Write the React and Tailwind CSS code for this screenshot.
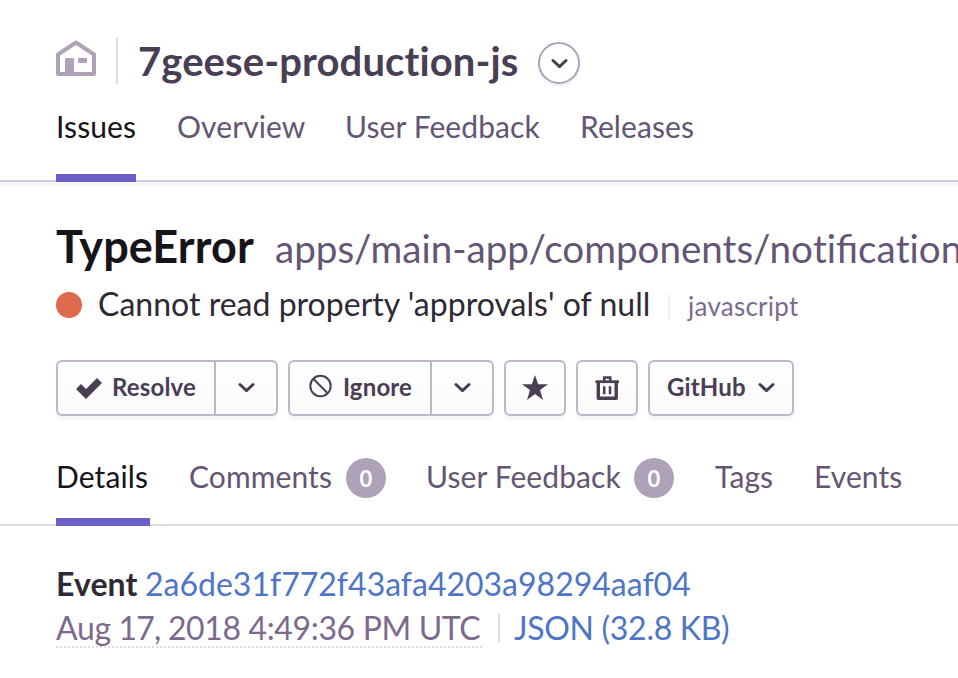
import React from "react";

function Chevron({ className = "" }) {
  return (
    <svg viewBox="0 0 18 12" className={"h-3 w-[18px] shrink-0 " + className} fill="none" stroke="currentColor" strokeWidth="3" strokeLinecap="round" strokeLinejoin="round">
      <path d="M3 2.500 9.500 8.700 16 2.500" />
    </svg>
  );
}

function Tab({ label, width, count, active }) {
  return (
    <div className={"flex shrink-0 items-start border-b-8 whitespace-nowrap " + width + (active ? " border-[#6c5fc7] text-[#161319]" : " border-transparent text-[#645574]")}>
      <span className="leading-9 tracking-[0.1px]">{label}</span>
      {count !== undefined && (
        <span className="ml-auto flex size-10 items-center justify-center rounded-full bg-[#aea2b9] text-[22px] font-bold text-white">{count}</span>
      )}
    </div>
  );
}

function Button({ children, className = "" }) {
  return (
    <button className={"flex h-14 items-center border-2 border-[#c0b5cb] bg-linear-to-b from-white to-[#fafafa] text-2xl font-bold text-[#493e54] shadow-[0_4px_0_#f6f5f7] " + className}>
      {children}
    </button>
  );
}

export default function App() {
  return (
    <div className="h-[678px] w-[958px] overflow-hidden bg-white font-['Lato',sans-serif] text-[#2f2936]">
      <header className="flex h-[182px] flex-col border-b-2 border-[#d1cadb] px-14 pt-[38px] shadow-[0_4px_0_#f6f6f8]">
        <div className="flex h-[46px]">
          <svg viewBox="0 0 40 36" className="mt-0.5 h-9 w-10 shrink-0 text-[#aea2b9]" fill="none">
            <path d="M2 14.500 20 2.500 38 14.500V34H2Z" stroke="currentColor" strokeWidth="4" strokeLinejoin="round" />
            <path d="M9 19.500q0-1.500 1.500-1.500h6.500q1 0 1 1V34H9Z" fill="currentColor" />
            <rect x="22" y="18" width="9" height="5" rx="1" fill="currentColor" />
          </svg>
          <span className="ml-5 w-0.5 bg-[#dedbe4]" />
          <h1 className="ml-5 w-[400px] text-[40px] leading-[46px] font-bold tracking-[0.1px] whitespace-nowrap text-[#493e54]">7geese-production-js</h1>
          <span className="mt-1 flex size-[42px] items-center justify-center rounded-full border-2 border-[#aea2b9] text-[#493e54] shadow-[0_2px_2px_#eeebf1]">
            <Chevron className="mt-0.5" />
          </span>
        </div>
        <nav className="-mb-0.5 mt-6 flex h-[74px] shrink-0 gap-[41px] text-[30px]">
          <Tab label="Issues" width="w-20" active />
          <Tab label="Overview" width="w-[127px]" />
          <Tab label="User Feedback" width="w-[194px]" />
          <Tab label="Releases" width="w-[114px]" />
        </nav>
      </header>

      <section className="pt-[37px] pl-14">
        <div className="flex h-[54px] items-baseline whitespace-nowrap">
          <h2 className="w-[219px] shrink-0 text-[45px] leading-[54px] font-bold tracking-[0.1px] text-[#161319]">TypeError</h2>
          <span className="text-[38.6px] leading-[50px] text-[#645574]">
            apps/main-app/components/no<span className="[font-variant-ligatures:none]">t</span>ifica<span className="[font-variant-ligatures:none]">t</span>ions
          </span>
        </div>
        <div className="mt-[11px] flex h-10 items-center whitespace-nowrap">
          <span className="mt-0.5 size-[26px] shrink-0 rounded-full bg-[#dd6a4d]" />
          <span className="ml-4 w-[570px] text-[32px] leading-10 tracking-[0.02px]">Cannot read property 'approvals' of null</span>
          <span className="mt-1.5 h-[26px] w-0.5 bg-[#f0eef5]" />
          <span className="mt-1 ml-[18px] text-[26px] leading-9 tracking-[0.25px] text-[#7c6a8e]">javascript</span>
        </div>
        <div className="mt-9 flex gap-2.5">
          <div className="flex">
            <Button className="w-40 rounded-l-md pl-[18px]">
              <svg viewBox="0 0 26 21" className="mr-2.5 h-[21px] w-[26px]" fill="currentColor">
                <path d="M0 11 5 6l5 5L21 0l5 5L10 21Z" />
              </svg>
              <span className="-mt-0.5 tracking-[0.15px]">Resolve</span>
            </Button>
            <Button className="-ml-0.5 w-16 justify-center rounded-r-md"><Chevron /></Button>
          </div>
          <div className="flex">
            <Button className="w-36 rounded-l-md pl-[19px]">
              <svg viewBox="0 0 24 24" className="mr-2.5 -mt-1 size-6" fill="none" stroke="currentColor" strokeWidth="2">
                <circle cx="11.500" cy="12" r="10.200" />
                <path d="m4.300 4.800 14.400 14.400" />
              </svg>
              <span className="-mt-0.5 tracking-[0.15px]">Ignore</span>
            </Button>
            <Button className="-ml-0.5 w-16 justify-center rounded-r-md"><Chevron /></Button>
          </div>
          <Button className="w-[62px] justify-center rounded-md">
            <svg viewBox="0 0 26 25" className="-mt-px h-[25px] w-[26px]" fill="currentColor">
              <path d="m13 0 3.100 9.300H26l-8 5.800L21 25l-8-6-8 6 3-9.900-8-5.800h9.900Z" />
            </svg>
          </Button>
          <Button className="w-[62px] justify-center rounded-md">
            <svg viewBox="0 0 24 24" className="-mt-px size-6" fill="none" stroke="currentColor">
              <path d="M.5 5.700h23.500" strokeWidth="2.800" />
              <path d="M9.200 5V1.500h6V5" strokeWidth="2.600" />
              <path d="M3.300 6v16.300h17.900V6" strokeWidth="3.400" strokeLinejoin="round" />
              <path d="M9.200 10.300V18.300M15 10.300V18.300" strokeWidth="2.500" />
            </svg>
          </Button>
          <Button className="w-[146px] rounded-md pl-[17px]">
            <span className="-mt-0.5 tracking-[0.15px]">GitHub</span>
            <Chevron className="ml-[11px]" />
          </Button>
        </div>
      </section>

      <nav className="mt-[42px] flex h-[68px] border-b-2 border-[#dedbe4] pl-14 text-[30px] whitespace-nowrap">
        <div className="-mb-0.5 flex h-[68px]">
          <Tab label="Details" width="w-[94px]" active />
          <Tab label="Comments" width="ml-[39px] w-[197px]" count={0} />
          <Tab label="User Feedback" width="ml-10 w-[248px]" count={0} />
          <Tab label="Tags" width="ml-[41px] w-[59px]" />
          <Tab label="Events" width="ml-10 w-[90px]" />
        </div>
      </nav>

      <section className="pt-9 pl-14 text-[32px] leading-[44px] whitespace-nowrap">
        <div className="flex">
          <strong className="w-[89px] tracking-[0.1px]">Event</strong>
          <a className="text-[#4e75c8]">2a6de31f772f43afa4203a98294aaf04</a>
        </div>
        <div className="flex">
          <span className="h-[42px] w-[426px] border-b-2 border-dotted border-[#dedbe4] tracking-[-0.36px] text-[#7c6a8e]">
            Aug <span className="tracking-[-0.8px]">17, </span>2018 4:49:36 PM UTC
          </span>
          <span className="mt-2 ml-4 h-7 w-0.5 bg-[#dedbe4]" />
          <a className="ml-3.5 tracking-[-0.3px] text-[#4e75c8]">JSON (32.8 KB)</a>
        </div>
      </section>
    </div>
  );
}
